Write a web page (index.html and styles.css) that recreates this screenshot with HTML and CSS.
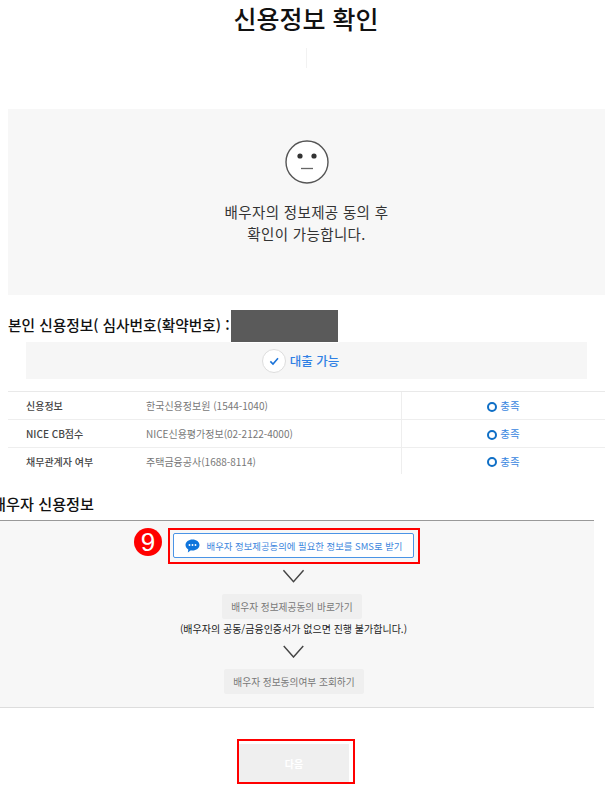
FILE: index.html
```html
<!DOCTYPE html>
<html lang="ko">
<head>
<meta charset="utf-8">
<title>신용정보 확인</title>
<link rel="stylesheet" href="styles.css">
</head>
<body>
<div class="page">
  <h1 class="title">신용정보 확인</h1>
  <div class="tick"></div>
  <section class="notice">
    <svg class="face" viewBox="0 0 44 44" width="44" height="44">
      <circle cx="22" cy="22" r="21" fill="#fff" stroke="#555" stroke-width="1.4"/>
      <circle cx="15" cy="16" r="2.6" fill="#333"/>
      <circle cx="29" cy="16" r="2.6" fill="#333"/>
      <path d="M16 28.5h12" stroke="#666" stroke-width="1.3"/>
    </svg>
    <p class="notice-text">배우자의 정보제공 동의 후<br>확인이 가능합니다.</p>
  </section>
  <h2 class="heading own">본인 신용정보( 심사번호(확약번호) :</h2>
  <div class="redact"></div>
  <div class="status">
    <span class="check">
      <svg viewBox="0 0 24 24" width="24" height="24"><path d="M6.5 12.5l4 4 7.5-8.5" fill="none" stroke="#1a73d9" stroke-width="2.400"/></svg>
    </span>
    <span class="status-text">대출 가능</span>
  </div>
  <div class="table">
    <div class="row"><div class="c-name">신용정보</div><div class="c-org">한국신용정보원 (1544-1040)</div><div class="c-ok"><i class="ring"></i>충족</div></div>
    <div class="row"><div class="c-name">NICE CB점수</div><div class="c-org">NICE신용평가정보(02-2122-4000)</div><div class="c-ok"><i class="ring"></i>충족</div></div>
    <div class="row last"><div class="c-name">채무관계자 여부</div><div class="c-org">주택금융공사(1688-8114)</div><div class="c-ok"><i class="ring"></i>충족</div></div>
  </div>
  <h2 class="heading spouse">배우자 신용정보</h2>
  <section class="flow">
    <button class="sms">
      <svg viewBox="0 0 16 15" width="15" height="14"><path d="M8 .5c4.1 0 7.5 2.6 7.5 5.9S12.100 12.300 8 12.300c-.6 0-1.200 0-1.700-.2L3 14.500l.5-3.300C1.600 10.100.5 8.400.5 6.400.5 3.100 3.900.5 8 .5z" fill="#0f75dc"/><circle cx="4.800" cy="6.400" r="1" fill="#fff"/><circle cx="8" cy="6.400" r="1" fill="#fff"/><circle cx="11.200" cy="6.400" r="1" fill="#fff"/></svg>
      <span>배우자 정보제공동의에 필요한 정보를 SMS로 받기</span>
    </button>
    <svg class="chev first" viewBox="0 0 24 14" width="23" height="14"><path d="M1.500 1l10.500 12L22.500 1" fill="none" stroke="#444" stroke-width="1.500"/></svg>
    <button class="ghost link">배우자 정보제공동의 바로가기</button>
    <p class="warn">(배우자의 공동/금융인증서가 없으면 진행 불가합니다.)</p>
    <svg class="chev second" viewBox="0 0 24 14" width="23" height="13"><path d="M1.500 1l10.500 12L22.500 1" fill="none" stroke="#444" stroke-width="1.500"/></svg>
    <button class="ghost query">배우자 정보동의여부 조회하기</button>
  </section>
  <div class="next-wrap"><button class="next">다음</button></div>
  <div class="mark mark-sms"></div>
  <div class="badge">9</div>
  <div class="mark mark-next"></div>
</div>
</body>
</html>
```
FILE: styles.css
```css
* { box-sizing: border-box; }
html, body { margin: 0; padding: 0; background: #fff; }
body { font-family: "Noto Sans CJK KR", "Noto Sans", sans-serif; color: #222; }
.page { position: relative; width: 605px; height: 795px; overflow: hidden; }
.title { margin: 0; height: 48px; padding-left: 7px; text-align: center; font-size: 25px; line-height: 36px; font-weight: 500; color: #111; }
.tick { width: 1px; height: 20px; margin-left: 306px; background: #f2f2f2; }
.notice { margin: 41px 0 0 8px; height: 186px; padding-top: 31px; background: #f7f7f7; display: flex; flex-direction: column; align-items: center; }
.face { display: block; }
.notice-text { margin: 17px 0 0; text-align: center; font-size: 14.500px; line-height: 22px; color: #333; letter-spacing: .35px; }
.heading { margin: 0; font-weight: 500; color: #111; line-height: 22px; white-space: nowrap; }
.own { margin: 19px 0 0 8px; height: 28px; font-size: 14.700px; }
.redact { position: absolute; left: 231px; top: 310px; width: 108px; height: 33px; background: #5a5a5a; border: solid #fff; border-width: 0 1px 1px 0; }
.status { margin-left: 26px; width: 561px; height: 37px; background: #f6f6f6; display: flex; align-items: center; justify-content: center; gap: 4px; padding-right: 12px; }
.check { width: 24px; height: 24px; border-radius: 50%; background: #fff; border: 1px solid #ddd; display: flex; align-items: center; justify-content: center; }
.check svg { width: 16px; height: 16px; }
.status-text { font-size: 12.500px; color: #2f80e4; font-weight: 500; }
.table { margin: 12px 0 0 8px; border-top: 1px solid #e9e9e9; }
.row { display: flex; height: 28px; align-items: center; border-bottom: 1px solid #eee; font-size: 10px; }
.row.last { border-bottom: 0; height: 26px; }
.c-name { width: 138px; padding-left: 18px; font-weight: 500; color: #444; }
.c-org { width: 255px; color: #777; }
.c-ok { align-self: stretch; flex: 1; border-left: 1px solid #eee; display: flex; align-items: center; justify-content: center; color: #3a86e0; gap: 3px; font-size: 10.500px; }
.ring { width: 10px; height: 10px; border-radius: 50%; border: 2px solid #0f6fc6; display: block; margin-top: 2px; }
.spouse { margin: 18px 0 0 -8px; height: 28px; font-size: 15.200px; }
.flow { width: 594px; height: 188px; border-top: 1px solid #999; border-bottom: 1px solid #ddd; background: #f7f7f7; display: flex; flex-direction: column; align-items: center; padding-top: 12px; }
.sms { margin-left: -7px; width: 241px; height: 25px; border: 1px solid #4a94e6; border-radius: 2px; background: #fff; display: flex; align-items: center; justify-content: center; gap: 7px; color: #3c86dd; font: 400 9.400px "Noto Sans CJK KR", sans-serif; padding: 0; white-space: nowrap; }
.chev { display: block; margin-left: -7px; }
.chev.first { margin-top: 11px; }
.chev.second { margin-top: 9px; margin-bottom: 1px; }
.ghost { height: 25px; border: 0; border-radius: 2px; background: #efefef; color: #777; font: 400 9.700px "Noto Sans CJK KR", sans-serif; padding: 0; }
.link { width: 140px; margin: 11px 0 0 -10px; }
.query { width: 140px; margin: 10px 0 0 -6px; }
.warn { margin: 2px 0 0 -7px; font-size: 10px; line-height: 15px; font-weight: 400; color: #222; white-space: nowrap; }
.next-wrap { padding: 36px 0 0 239px; }
.next { display: block; width: 110px; height: 38px; border: 0; background: #efefef; color: #fff; font: 700 10px "Noto Sans CJK KR", sans-serif; padding: 0; }
.mark { position: absolute; border: 2px solid #f00; }
.mark-sms { left: 168px; top: 528px; width: 252px; height: 36px; }
.mark-next { left: 237px; top: 739px; width: 118px; height: 45px; }
.badge { position: absolute; left: 134px; top: 528px; width: 28px; height: 28px; border-radius: 50%; background: #f00; color: #fff; font: 400 26px/28px "Liberation Sans", sans-serif; text-align: center; }
```
